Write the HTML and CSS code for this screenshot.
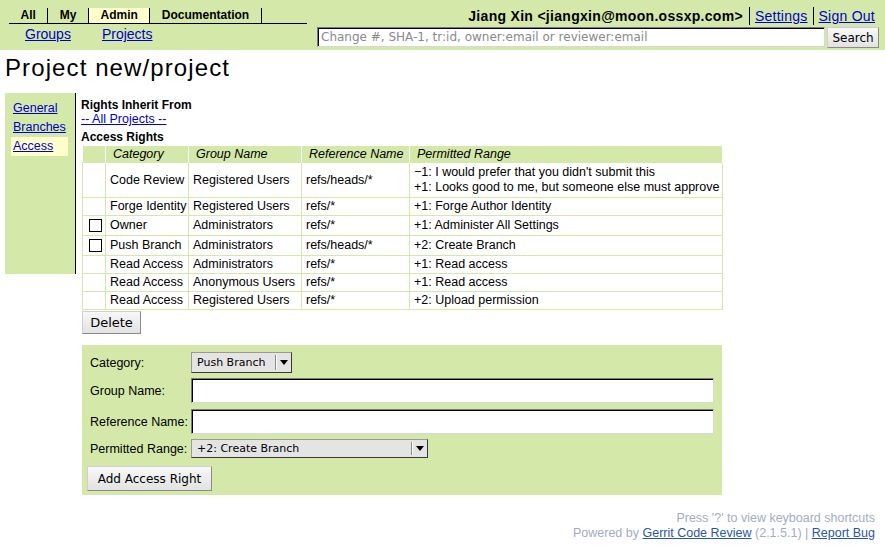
FILE: index.html
```html
<!DOCTYPE html>
<html>
<head>
<meta charset="utf-8">
<title>Project new/project</title>
<link rel="stylesheet" href="styles.css">
</head>
<body>
<div class="topbar">
  <div class="topleft">
    <div class="tabs">
      <span class="tab">All</span><span class="tab">My</span><span class="tab tab-sel">Admin</span><span class="tab">Documentation</span>
    </div>
    <div class="subnav">
      <a href="#" class="sublink">Groups</a><a href="#" class="sublink">Projects</a>
    </div>
  </div>
  <div class="topright">
    <div class="userline">
      <span class="user">Jiang Xin &lt;jiangxin@moon.ossxp.com&gt;</span><a href="#" class="ulink">Settings</a><a href="#" class="ulink ulink-last">Sign Out</a>
    </div>
    <div class="searchrow">
      <input class="textbox searchbox" type="text" placeholder="Change #, SHA-1, tr:id, owner:email or reviewer:email"><button class="btn searchbtn">Search</button>
    </div>
  </div>
</div>

<h1 class="title">Project new/project</h1>

<div class="main">
  <div class="sidenav">
    <a href="#" class="navitem">General</a>
    <a href="#" class="navitem">Branches</a>
    <a href="#" class="navitem navitem-sel">Access</a>
  </div>
  <div class="content">
    <div class="heading">Rights Inherit From</div>
    <a href="#" class="inherit">-- All Projects --</a>
    <div class="heading heading-access">Access Rights</div>
    <table class="rights">
      <colgroup>
        <col class="c-chk"><col class="c-cat"><col class="c-grp"><col class="c-ref"><col class="c-rng">
      </colgroup>
      <tr>
        <th class="th-chk"></th>
        <th>Category</th>
        <th>Group Name</th>
        <th>Reference Name</th>
        <th>Permitted Range</th>
      </tr>
      <tr class="row-tall">
        <td></td><td>Code Review</td><td>Registered Users</td><td>refs/heads/*</td>
        <td>&minus;1: I would prefer that you didn't submit this<br>+1: Looks good to me, but someone else must approve</td>
      </tr>
      <tr>
        <td></td><td>Forge Identity</td><td>Registered Users</td><td>refs/*</td><td>+1: Forge Author Identity</td>
      </tr>
      <tr>
        <td><input type="checkbox" class="chk"></td><td>Owner</td><td>Administrators</td><td>refs/*</td><td>+1: Administer All Settings</td>
      </tr>
      <tr>
        <td><input type="checkbox" class="chk"></td><td>Push Branch</td><td>Administrators</td><td>refs/heads/*</td><td>+2: Create Branch</td>
      </tr>
      <tr>
        <td></td><td>Read Access</td><td>Administrators</td><td>refs/*</td><td>+1: Read access</td>
      </tr>
      <tr>
        <td></td><td>Read Access</td><td>Anonymous Users</td><td>refs/*</td><td>+1: Read access</td>
      </tr>
      <tr>
        <td></td><td>Read Access</td><td>Registered Users</td><td>refs/*</td><td>+2: Upload permission</td>
      </tr>
    </table>
    <button class="btn delbtn">Delete</button>

    <div class="addform">
      <div class="frow r1">
        <label class="flabel">Category:</label>
        <div class="dropdown dd-cat"><span class="ddval">Push Branch</span><span class="ddarrow"><svg width="8" height="5" viewBox="0 0 8 5"><path d="M0 0H8L4 5Z" fill="#000"/></svg></span></div>
      </div>
      <div class="frow r2">
        <label class="flabel">Group Name:</label>
        <input class="textbox finput" type="text">
      </div>
      <div class="frow r3">
        <label class="flabel">Reference Name:</label>
        <input class="textbox finput" type="text">
      </div>
      <div class="frow r4">
        <label class="flabel">Permitted Range:</label>
        <div class="dropdown dd-rng"><span class="ddval">+2: Create Branch</span><span class="ddarrow"><svg width="8" height="5" viewBox="0 0 8 5"><path d="M0 0H8L4 5Z" fill="#000"/></svg></span></div>
      </div>
      <div class="frow r5">
        <button class="btn addbtn">Add Access Right</button>
      </div>
    </div>
  </div>
</div>

<div class="footer">
  <div>Press '?' to view keyboard shortcuts</div>
  <div>Powered by <a href="#" class="flink">Gerrit Code Review</a> (2.1.5.1) | <a href="#" class="flink">Report Bug</a></div>
</div>
</body>
</html>
```

FILE: styles.css
```css
body {
  margin: 0;
  font-family: "Liberation Sans", Arial, Helvetica, sans-serif;
  font-size: 12.5px;
  color: #000;
  background: #fff;
}

a {
  color: #0000cc;
}

/* ---------- top bar ---------- */
.topbar {
  display: flex;
  justify-content: space-between;
  height: 50px;
  background: #d4e9a9;
}

.topleft {
  padding: 8px 0 0 9px;
}

.tabs {
  display: flex;
  width: 298px;
  border-bottom: 1px solid #000;
}

.tab {
  font-size: 12px;
  font-weight: bold;
  line-height: 15px;
  padding: 0 11.5px;
  border-right: 1px solid #000;
}

.tab-sel {
  background: #ffffcc;
}

.subnav {
  display: flex;
  gap: 31px;
  padding-left: 16px;
  margin-top: 2px;
}

.sublink {
  font-size: 14px;
  line-height: 17px;
}

.topright {
  display: flex;
  flex-direction: column;
  align-items: flex-end;
  padding: 7px 6px 0 0;
}

.userline {
  display: flex;
  align-items: stretch;
  height: 18px;
  line-height: 18px;
  font-size: 14px;
}

.user {
  font-weight: bold;
  letter-spacing: 0.3px;
  padding-right: 6px;
}

.ulink {
  border-left: 1px solid #000;
  padding: 0 5px;
  letter-spacing: 0.25px;
}

.ulink-last {
  padding-right: 4px;
}

.searchrow {
  display: flex;
  gap: 2px;
  margin-top: 2px;
  align-items: flex-start;
}

.textbox {
  box-sizing: border-box;
  margin: 0;
  background: #fff;
  border: 1px solid;
  border-color: #7a7a7a #d8d8d8 #d8d8d8 #7a7a7a;
  box-shadow: inset 1px 1px 0 #000;
  font-family: "DejaVu Sans", sans-serif;
  font-size: 12px;
  padding: 0 3px;
  outline: none;
}

.searchbox {
  width: 508px;
  height: 20px;
}

.searchbox::placeholder {
  color: #8a8a8a;
}

.btn {
  box-sizing: border-box;
  margin: 0;
  font-family: "DejaVu Sans", sans-serif;
  color: #000;
  background: linear-gradient(#f8f8f8, #e2e2e2);
  border: 1px solid;
  border-color: #d0d0d0 #8a8a8a #8a8a8a #d0d0d0;
  padding: 0;
}

.searchbtn {
  width: 52px;
  height: 21px;
  font-size: 12px;
}

/* ---------- title ---------- */
.title {
  margin: 4px 0 0 5px;
  font-size: 24px;
  font-weight: normal;
  letter-spacing: 1.1px;
  line-height: 28px;
}

/* ---------- main ---------- */
.main {
  display: flex;
  align-items: flex-start;
  margin-top: 11px;
  padding-left: 5px;
}

.sidenav {
  display: flex;
  flex-direction: column;
  width: 64px;
  height: 175px;
  padding: 6px 0 0 6px;
  background: #d4e9a9;
  border-right: 1px solid #000;
}

.navitem {
  width: 53px;
  padding: 2px 2px;
  line-height: 15px;
}

.navitem-sel {
  background: #ffffcc;
}

.content {
  display: flex;
  flex-direction: column;
  align-items: flex-start;
  margin-left: 5px;
  padding-top: 5px;
}

.heading {
  font-size: 12px;
  font-weight: bold;
  line-height: 14px;
}

.inherit {
  line-height: 14px;
}

.heading-access {
  margin-top: 4px;
}

/* ---------- rights table ---------- */
.rights {
  border-collapse: collapse;
  table-layout: fixed;
  width: 640px;
  margin: 2px 0 0 1px;
}

.c-chk { width: 23px; }
.c-cat { width: 83px; }
.c-grp { width: 113px; }
.c-ref { width: 108px; }
.c-rng { width: 313px; }

.rights th {
  background: #d4e9a9;
  font-weight: normal;
  font-style: italic;
  text-align: left;
  line-height: 15px;
  padding: 1px 7px 0;
  white-space: nowrap;
  overflow: hidden;
  border-left: 1px solid #fff;
  border-right: 1px solid #fff;
}

.rights th.th-chk {
  border-left: none;
}

.rights td {
  border: 1px solid #d4e9a9;
  line-height: 15px;
  padding: 1px 4px;
  white-space: nowrap;
  overflow: hidden;
}

.rights .row-tall td {
  padding: 2px 4px;
}

.chk {
  appearance: none;
  -webkit-appearance: none;
  display: block;
  width: 13px;
  height: 13px;
  margin: 2px 0 2px 2px;
  border: 1px solid #000;
  background: #fff;
  box-sizing: border-box;
}

.delbtn {
  width: 59px;
  height: 23px;
  margin: 1px 0 0 1px;
  font-size: 13px;
}

/* ---------- add form ---------- */
.addform {
  box-sizing: border-box;
  width: 640px;
  margin: 11px 0 0 1px;
  padding: 7px 8px 4px 5px;
  background: #d4e9a9;
  display: flex;
  flex-direction: column;
}

.frow {
  display: flex;
  align-items: center;
}

.r2 { margin-top: 5px; }
.r3 { margin-top: 6px; }
.r4 { margin-top: 5px; }
.r5 { margin-top: 8px; }

.flabel {
  width: 101px;
  padding-left: 3px;
}

.finput {
  width: 523px;
  height: 25px;
}

.dropdown {
  box-sizing: border-box;
  display: flex;
  align-items: stretch;
  background: #e4e4e4;
  border: 1px solid;
  border-color: #9a9a9a #3a3a3a #3a3a3a #9a9a9a;
  font-family: "DejaVu Sans", sans-serif;
  font-size: 11px;
}

.dd-cat {
  width: 101px;
  height: 21px;
}

.dd-rng {
  width: 237px;
  height: 19px;
}

.ddval {
  flex: 1;
  display: flex;
  align-items: center;
  padding-left: 5px;
}

.ddarrow {
  display: flex;
  align-items: center;
  justify-content: center;
  width: 15px;
  margin: 2px 0;
  border-left: 1px solid #8a8a8a;
  box-shadow: inset 1px 0 0 #fff;
}

.addbtn {
  width: 125px;
  height: 25px;
  font-size: 12px;
  margin-left: 0;
}

/* ---------- footer ---------- */
.footer {
  margin-top: 16px;
  padding-right: 10px;
  text-align: right;
  line-height: 15px;
  color: #a4abc6;
}

.flink {
  color: #2a56a8;
}
```
